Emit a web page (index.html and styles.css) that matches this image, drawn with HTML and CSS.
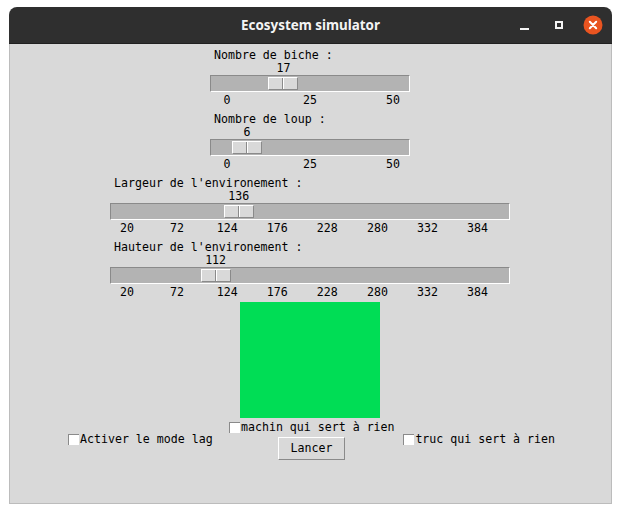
FILE: index.html
```html
<!DOCTYPE html>
<html>
<head>
<meta charset="utf-8">
<title>Ecosystem simulator</title>
<link rel="stylesheet" href="styles.css">
</head>
<body>
<div class="window">
  <div class="titlebar">
    <div class="spacer"></div>
    <div class="title">Ecosystem simulator</div>
    <div class="controls">
      <span class="ctl ctl-min"></span>
      <span class="ctl ctl-max"></span>
      <span class="ctl ctl-close">
        <svg width="20" height="20" viewBox="0 0 20 20"><circle cx="10" cy="10" r="9.5" fill="#e95420"/><path d="M6.8 6.8 L13.2 13.2 M13.2 6.8 L6.8 13.2" stroke="#fff" stroke-width="2" stroke-linecap="round"/></svg>
      </span>
    </div>
  </div>
  <div class="content">
    <div class="scale small" style="--p:0.34; --step:83px">
      <div class="scale-label">Nombre de biche :</div>
      <div class="scale-value"><span>17</span></div>
      <div class="trough"><div class="thumb"></div></div>
      <div class="ticks"><span>0</span><span>25</span><span>50</span></div>
    </div>
    <div class="scale small" style="--p:0.12; --step:83px">
      <div class="scale-label">Nombre de loup :</div>
      <div class="scale-value"><span>6</span></div>
      <div class="trough"><div class="thumb"></div></div>
      <div class="ticks"><span>0</span><span>25</span><span>50</span></div>
    </div>
    <div class="scale large" style="--p:0.30526; --step:50.08px">
      <div class="scale-label">Largeur de l'environement :</div>
      <div class="scale-value"><span>136</span></div>
      <div class="trough"><div class="thumb"></div></div>
      <div class="ticks"><span>20</span><span>72</span><span>124</span><span>176</span><span>228</span><span>280</span><span>332</span><span>384</span></div>
    </div>
    <div class="scale large" style="--p:0.24211; --step:50.08px">
      <div class="scale-label">Hauteur de l'environement :</div>
      <div class="scale-value"><span>112</span></div>
      <div class="trough"><div class="thumb"></div></div>
      <div class="ticks"><span>20</span><span>72</span><span>124</span><span>176</span><span>228</span><span>280</span><span>332</span><span>384</span></div>
    </div>
    <div class="canvas"></div>
    <div class="options">
      <label class="check opt-left"><span class="box"></span><span>Activer le mode lag</span></label>
      <label class="check opt-center"><span class="box"></span><span>machin qui sert à rien</span></label>
      <button class="btn">Lancer</button>
      <label class="check opt-right"><span class="box"></span><span>truc qui sert à rien</span></label>
    </div>
  </div>
</div>
</body>
</html>
```
FILE: styles.css
```css
* { box-sizing: border-box; }
html, body { margin: 0; background: #ffffff; }
body { padding: 7px 0 0 9px; }

.window {
  width: 603px;
  height: 497px;
  display: flex;
  flex-direction: column;
  border-radius: 8px 8px 0 0;
  overflow: hidden;
}

.titlebar {
  flex: none;
  height: 37px;
  background: #2f2f2f;
  border-bottom: 1px solid #202020;
  display: grid;
  grid-template-columns: 1fr auto 1fr;
  align-items: center;
}
.title {
  font-family: "Noto Sans", sans-serif;
  font-weight: bold;
  font-size: 13.4px;
  color: #f4f4f4;
}
.controls {
  justify-self: end;
  display: flex;
  align-items: center;
  padding-right: 9px;
}
.ctl { display: block; flex: none; }
.ctl-min {
  width: 9px;
  height: 2px;
  background: #f4f4f4;
  margin-top: 7px;
}
.ctl-max {
  width: 8px;
  height: 8px;
  border: 2px solid #f4f4f4;
  margin-left: 26px;
}
.ctl-close {
  width: 20px;
  height: 20px;
  margin-left: 20px;
}
.ctl-close svg { display: block; }

.content {
  flex: 1;
  background: #d9d9d9;
  border: 1px solid #bcbcbc;
  border-top: none;
  padding: 5px 1px 0 0;
  display: flex;
  flex-direction: column;
  align-items: center;
  font-family: "DejaVu Sans Mono", monospace;
  font-size: 11.6px;
  line-height: 13px;
  color: #000;
}

.scale { flex: none; }
.scale.small { width: 200px; }
.scale.large { width: 400px; }
.scale + .scale { margin-top: 3px; }

.scale-label {
  height: 13px;
  padding-left: 4px;
  white-space: pre;
}
.scale-value {
  height: 13px;
  padding-left: calc(17px + var(--p) * (100% - 34px));
  white-space: nowrap;
}
.scale-value span {
  display: inline-block;
  transform: translateX(-50%);
}
.trough {
  height: 17px;
  border: 1px solid;
  border-color: #8a8a8a #ffffff #ffffff #8a8a8a;
  background: #b3b3b3;
  padding: 1px;
  display: flex;
}
.thumb {
  flex: none;
  width: 30px;
  height: 13px;
  margin-left: calc(var(--p) * (100% - 30px));
  border: 1px solid;
  border-color: #ffffff #8a8a8a #8a8a8a #ffffff;
  background:
    linear-gradient(to right, transparent 13px, #8a8a8a 13px, #8a8a8a 14px, #ffffff 14px, #ffffff 15px, transparent 15px),
    #d9d9d9;
}
.ticks {
  display: flex;
  height: 18px;
  padding-top: 2px;
  margin-left: calc(17px - var(--step) / 2);
  white-space: nowrap;
}
.ticks span {
  flex: none;
  width: var(--step);
  text-align: center;
}

.canvas {
  flex: none;
  width: 140px;
  height: 116px;
  background: #00dd55;
}

.options {
  display: grid;
  grid-template-columns: 161px 165px 161px;
  grid-template-rows: 18px 25px;
  align-items: center;
  margin-left: 3px;
}
.check {
  display: flex;
  align-items: center;
  gap: 1px;
  white-space: pre;
}
.box {
  flex: none;
  width: 11px;
  height: 11px;
  background: #ffffff;
  border-top: 1px solid #8a8a8a;
  border-left: 1px solid #8a8a8a;
}
.opt-left { grid-row: 1 / 3; grid-column: 1; justify-self: start; }
.opt-center { grid-row: 1; grid-column: 2; justify-self: start; }
.opt-right { grid-row: 1 / 3; grid-column: 3; justify-self: end; }
.btn {
  grid-row: 2;
  grid-column: 2;
  justify-self: center;
  width: 67px;
  height: 23px;
  margin: 0;
  padding: 0;
  background: #d9d9d9;
  border: 1px solid;
  border-color: #ffffff #8a8a8a #8a8a8a #ffffff;
  font-family: "DejaVu Sans Mono", monospace;
  font-size: 11.6px;
  line-height: 13px;
  color: #000;
}
```
